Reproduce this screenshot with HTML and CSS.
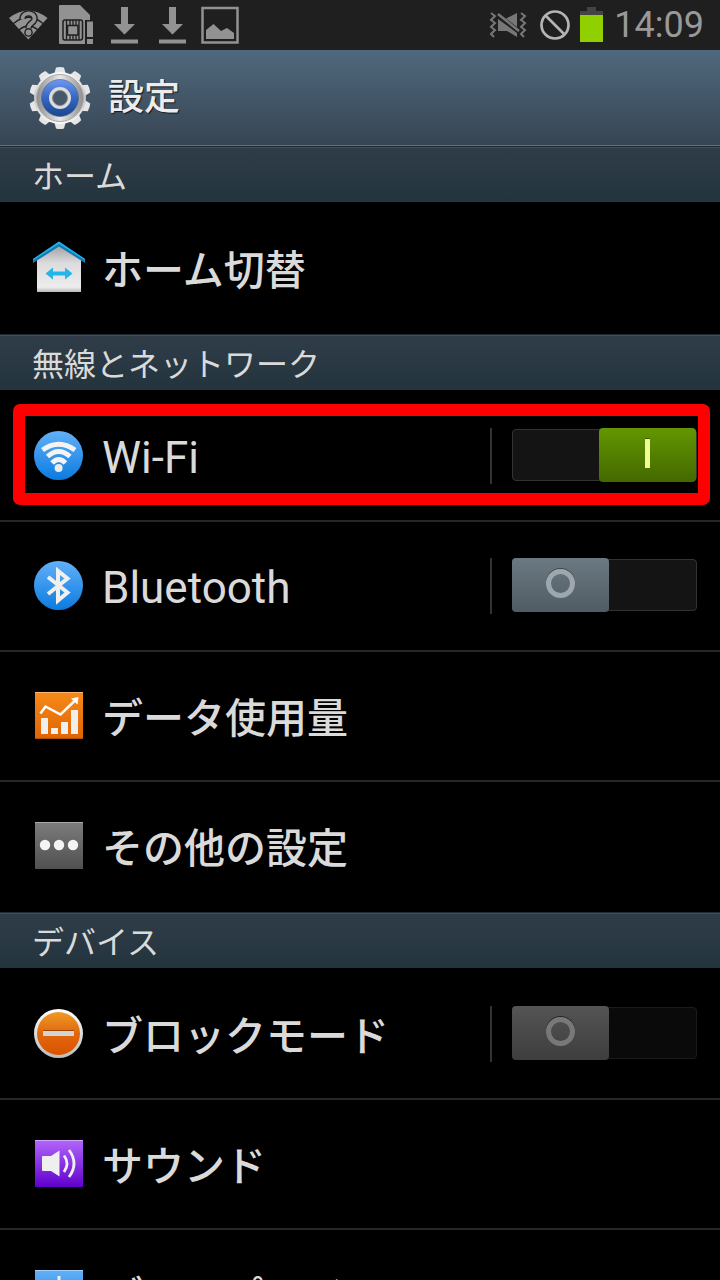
FILE: index.html
```html
<!DOCTYPE html>
<html lang="ja">
<head>
    <meta charset="UTF-8">
    <meta name="viewport" content="width=device-width, initial-scale=1.0">
    <title>設定</title>
    <link rel="stylesheet" href="styles.css">
</head>
<body>

    <div class="status-bar">
        <div class="status-left">
            <svg width="48" height="50" viewBox="0 0 48 50">
                <path d="M5 18Q24.3 3 43.5 18L24.3 39.5z" fill="#929292"/>
                <path d="M9.500 23.500Q24.300 11 39 23.500M15 30Q24.300 22 34 30" fill="none" stroke="#1f1f1f" stroke-width="1.400"/>
                <path d="M18.500 19C18.500 11.500 31 11.500 30.500 19C30.500 23 24.500 23 24.500 28.500" fill="none" stroke="#1f1f1f" stroke-width="6.500"/>
                <circle cx="24.500" cy="32.500" r="4.300" fill="#1f1f1f"/>
                <path d="M18.500 19C18.500 11.500 31 11.500 30.500 19C30.500 23 24.500 23 24.500 28" fill="none" stroke="#929292" stroke-width="3.800"/>
                <circle cx="24.500" cy="32.500" r="2.900" fill="#929292"/>
            </svg>
            <svg width="48" height="50" viewBox="0 0 48 50">
                <path d="M8 5H28L38 15V20H33V44H8Q7 44 7 43V6Q7 5 8 5z" fill="#929292"/>
                <rect x="11" y="20" width="19.500" height="20" rx="2" fill="none" stroke="#1f1f1f" stroke-width="1.500"/>
                <path d="M14.500 20v20M27 20v20M18 20v5M21 20v5M24 20v5M18 35v5M21 35v5M24 35v5" stroke="#1f1f1f" stroke-width="1.300"/>
                <rect x="15.500" y="25.500" width="10.500" height="9.500" fill="#929292" stroke="#1f1f1f" stroke-width="1.500"/>
                <path d="M35 21.500h6v15.500h-6zM35 39h6v5h-6z" fill="#929292"/>
            </svg>
            <svg width="48" height="50" viewBox="0 0 48 50">
                <path d="M21 7H28V24H35L24.500 34.500L14 24H21zM11 39.500H38V43.500H11z" fill="#929292"/>
            </svg>
            <svg width="48" height="50" viewBox="0 0 48 50">
                <path d="M21 7H28V24H35L24.500 34.500L14 24H21zM11 39.500H38V43.500H11z" fill="#929292"/>
            </svg>
            <svg width="48" height="50" viewBox="0 0 48 50">
                <rect x="6.500" y="8" width="35" height="34.500" fill="none" stroke="#929292" stroke-width="2.500"/>
                <path d="M10 39V30L17.500 24L25 31L31 28L38 33V39z" fill="#929292"/>
            </svg>
        </div>
        <div class="status-right">
            <svg width="40" height="50" viewBox="0 0 40 50">
                <path d="M3 13l4 3l-4 4l4 3l-4 4l4 3l-4 4l3 3M33 13l4 3l-4 4l4 3l-4 4l4 3l-4 4l3 3" fill="none" stroke="#777" stroke-width="2"/>
                <path d="M10 19L29 33V37L19 31H10zM18 18.500L29 13V27z" fill="#777"/>
                <path d="M10 14L31 31" stroke="#777" stroke-width="2.500"/>
            </svg>
            <svg width="32" height="50" viewBox="0 0 32 50">
                <circle cx="17" cy="25" r="13.500" fill="none" stroke="#b4b4b4" stroke-width="2.700"/>
                <path d="M7.500 15.500L26.500 34.500" stroke="#b4b4b4" stroke-width="2.700"/>
            </svg>
            <svg width="24" height="50" viewBox="0 0 24 50">
                <path d="M7 7H16V11H23V15H0V11H7z" fill="#444"/>
                <path d="M0 15H23V42H0z" fill="#92cf00"/>
            </svg>
            <time class="clock">14:09</time>
        </div>
    </div>

    <header class="title-bar">
        <svg width="64" height="64" viewBox="0 0 64 64">
            <defs>
                <linearGradient id="gearMetal" x2="0" y2="1">
                    <stop offset="0" stop-color="#f8f8f8"/>
                    <stop offset=".5" stop-color="#c4c4c4"/>
                    <stop offset="1" stop-color="#fafafa"/>
                </linearGradient>
                <linearGradient id="gearBand">
                    <stop offset="0" stop-color="#8e8e8e"/>
                    <stop offset=".5" stop-color="#e8e8e8"/>
                    <stop offset="1" stop-color="#8e8e8e"/>
                </linearGradient>
                <linearGradient id="gearBlue" x2="0" y2="1">
                    <stop offset="0" stop-color="#6e98f2"/>
                    <stop offset=".5" stop-color="#3566c2"/>
                    <stop offset="1" stop-color="#18468f"/>
                </linearGradient>
                <path id="tooth" d="M26 9L28 1.500Q32 .5 36 1.500L38 9z"/>
            </defs>
            <g fill="#e6e6e6">
                <use href="#tooth"/>
                <use href="#tooth" transform="rotate(36 32 32)"/>
                <use href="#tooth" transform="rotate(72 32 32)"/>
                <use href="#tooth" transform="rotate(108 32 32)"/>
                <use href="#tooth" transform="rotate(144 32 32)"/>
                <use href="#tooth" transform="rotate(180 32 32)"/>
                <use href="#tooth" transform="rotate(216 32 32)"/>
                <use href="#tooth" transform="rotate(252 32 32)"/>
                <use href="#tooth" transform="rotate(288 32 32)"/>
                <use href="#tooth" transform="rotate(324 32 32)"/>
            </g>
            <circle cx="32" cy="32" r="26" fill="url(#gearMetal)"/>
            <circle cx="32" cy="32" r="23.500" fill="url(#gearBand)" stroke="#aaa"/>
            <circle cx="32" cy="32" r="18.500" fill="url(#gearBlue)" stroke="#4a5f86" stroke-width=".6"/>
            <circle cx="32" cy="32" r="9.200" fill="#45596b" stroke="#dcdcdc" stroke-width="3.600"/>
            <circle cx="32" cy="32" r="7.500" fill="none" stroke="#858585"/>
        </svg>
        <h1>設定</h1>
    </header>

    <main class="settings">
        <h2>ホーム</h2>
        <ul>
            <li>
                <svg width="54" height="54" viewBox="0 0 54 54">
                    <defs>
                        <linearGradient id="wall" x2="0" y2="1">
                            <stop offset="0" stop-color="#9c9ca0"/>
                            <stop offset=".4" stop-color="#dcdcde"/>
                            <stop offset=".9" stop-color="#ececec"/>
                            <stop offset="1" stop-color="#b8b8b8"/>
                        </linearGradient>
                    </defs>
                    <path d="M5 17L27 3L49 17V51H5z" fill="url(#wall)"/>
                    <path d="M1 18L27 .500L53 18V22L27 5.500L1 22z" fill="#1279b2"/>
                    <path d="M1 18L27 .500L53 18V19.500L27 3L1 19.500z" fill="#1fb0e8"/>
                    <path d="M13.500 32.500L21 26.500V30.500H33V26.500L40.500 32.500L33 38.500V34.500H21V38.500z" fill="#25b5e8"/>
                </svg>
                <a href="#home">ホーム切替</a>
            </li>
        </ul>

        <h2>無線とネットワーク</h2>
        <ul>
            <li class="highlight">
                <svg width="54" height="54" viewBox="0 0 54 54">
                    <defs>
                        <linearGradient id="blue" x2="0" y2="1">
                            <stop offset="0" stop-color="#62b0f8"/>
                            <stop offset="1" stop-color="#0b7be0"/>
                        </linearGradient>
                    </defs>
                    <circle cx="26.500" cy="26.500" r="24.500" fill="url(#blue)"/>
                    <g fill="none" stroke="#f4f4f4" stroke-width="5">
                        <path d="M10.500 21Q26.700 9.500 43 21"/>
                        <path d="M15.500 27.500Q26.700 17.500 38 27.500"/>
                        <path d="M20 34Q26.700 27 33.500 34"/>
                    </g>
                    <circle cx="26.600" cy="39" r="4" fill="#ececec"/>
                </svg>
                <label class="latin" for="wifi">Wi-Fi</label>
                <span class="switch-cell"><input type="checkbox" role="switch" id="wifi" checked></span>
            </li>
            <li>
                <svg width="54" height="54" viewBox="0 0 54 54">
                    <circle cx="26.500" cy="26.500" r="24.500" fill="url(#blue)"/>
                    <path d="M16 18L35.500 33.500L26 41.500V12L35.500 19.500L16 35" fill="none" stroke="#f0f0f0" stroke-width="4"/>
                </svg>
                <label class="latin" for="bluetooth">Bluetooth</label>
                <span class="switch-cell"><input type="checkbox" role="switch" id="bluetooth"></span>
            </li>
            <li>
                <svg width="54" height="54" viewBox="0 0 54 54">
                    <defs>
                        <linearGradient id="orange" x2="0" y2="1">
                            <stop offset="0" stop-color="#f58a1c"/>
                            <stop offset="1" stop-color="#e06400"/>
                        </linearGradient>
                    </defs>
                    <rect x="3" y="3" width="48" height="47" fill="url(#orange)"/>
                    <path d="M3 3.500H51" stroke="#fbb56c"/>
                    <path d="M3 49.500H51" stroke="#b24e00"/>
                    <path d="M9 29h7v16H9zM19 39h7v6h-7zM29 33h7v12h-7zM39 21h7v24h-7z" fill="#efefef"/>
                    <path d="M8.500 24.500L13.500 17.500L28.500 25.500L43 11.500" fill="none" stroke="#fff" stroke-width="2.500"/>
                    <path d="M39 9.500L46.500 8L45.500 15.500z" fill="#fff"/>
                </svg>
                <a href="#data">データ使用量</a>
            </li>
            <li>
                <svg width="54" height="54" viewBox="0 0 54 54">
                    <defs>
                        <linearGradient id="gray" x2="0" y2="1">
                            <stop offset="0" stop-color="#7c7c7c"/>
                            <stop offset="1" stop-color="#505050"/>
                        </linearGradient>
                    </defs>
                    <rect x="3" y="3" width="48" height="47" fill="url(#gray)"/>
                    <path d="M3 3.500H51" stroke="#a8a8a8"/>
                    <g fill="#f4f4f4">
                        <circle cx="13" cy="26" r="5.200"/>
                        <circle cx="27" cy="26" r="5.200"/>
                        <circle cx="41" cy="26" r="5.200"/>
                    </g>
                </svg>
                <a href="#more">その他の設定</a>
            </li>
        </ul>

        <h2>デバイス</h2>
        <ul>
            <li>
                <svg width="54" height="54" viewBox="0 0 54 54">
                    <defs>
                        <linearGradient id="block" x2="0" y2="1">
                            <stop offset="0" stop-color="#f09a26"/>
                            <stop offset=".5" stop-color="#e0680c"/>
                            <stop offset="1" stop-color="#da5200"/>
                        </linearGradient>
                        <linearGradient id="rim" x2="0" y2="1">
                            <stop offset="0" stop-color="#fff"/>
                            <stop offset="1" stop-color="#bcbcbc"/>
                        </linearGradient>
                    </defs>
                    <circle cx="26.500" cy="26.500" r="24.500" fill="url(#rim)"/>
                    <circle cx="26.500" cy="26.500" r="21.500" fill="url(#block)"/>
                    <path d="M11 23.500H42" stroke="#9c4600"/>
                    <rect x="11" y="24" width="31" height="5" fill="#d4d4d4"/>
                </svg>
                <label for="block-mode">ブロックモード</label>
                <span class="switch-cell"><input type="checkbox" role="switch" id="block-mode" disabled></span>
            </li>
            <li>
                <svg width="54" height="54" viewBox="0 0 54 54">
                    <defs>
                        <linearGradient id="purple" x2="0" y2="1">
                            <stop offset="0" stop-color="#b266fa"/>
                            <stop offset="1" stop-color="#6000cc"/>
                        </linearGradient>
                    </defs>
                    <rect x="3" y="3" width="48" height="47" fill="url(#purple)"/>
                    <path d="M3 3.500H51" stroke="#d2a4fb"/>
                    <path d="M11 19H19L27.500 13.500V39.500L19 34H11Q10 34 10 33V20Q10 19 11 19z" fill="#efefef"/>
                    <path d="M32 18.500Q38 26.500 32 35M37 13Q47 26.500 37 40" fill="none" stroke="#efefef" stroke-width="2.800"/>
                </svg>
                <a href="#sound">サウンド</a>
            </li>
            <li>
                <svg width="54" height="54" viewBox="0 0 54 54">
                    <rect x="3" y="3" width="48" height="47" fill="url(#blue)"/>
                    <path d="M3 3.500H51" stroke="#a4d2fb"/>
                    <circle cx="27" cy="26.500" r="7.500" fill="#efefef"/>
                    <path d="M27 9v7M27 37v7M9.500 26.500h7M37.500 26.500h7M14.500 14l5 5M34.500 34l5 5M39.500 14l-5 5M19.500 34l-5 5" stroke="#efefef" stroke-width="3"/>
                </svg>
                <a href="#display">ディスプレイ</a>
            </li>
        </ul>
    </main>

</body>
</html>
```
FILE: styles.css
```css
*, *::before, *::after {
    box-sizing: border-box;
}
body {
    margin: 0;
    height: 100vh;
    display: flex;
    flex-direction: column;
    background: #000;
    color: #dadada;
    font-family: Roboto, "Noto Sans CJK JP", sans-serif;
}
svg {
    display: block;
    flex: none;
}
.status-bar {
    display: flex;
    flex: none;
    justify-content: space-between;
    height: 50px;
    padding: 0 16px 0 4px;
    background: #1f1f1f;
}
.status-left, .status-right {
    display: flex;
    align-items: center;
}
.status-right {
    gap: 10px;
}
.clock {
    color: #999;
    font-size: 36px;
    line-height: 50px;
}
.title-bar {
    display: flex;
    flex: none;
    align-items: center;
    gap: 16px;
    height: 96px;
    padding: 0 28px;
    background: linear-gradient(#50687d, #364553);
    border-bottom: 1px solid #5d7488;
}
h1 {
    margin: 0;
    color: #ececec;
    font-size: 36px;
    font-weight: 500;
    line-height: 48px;
    text-shadow: 1px 1px 1px #10181f;
}
.settings {
    flex: 1;
    overflow-y: auto;
    scrollbar-width: none;
}
h2 {
    height: 56px;
    margin: 0;
    padding: 2px 32px 0;
    background: linear-gradient(#303d49, #23343d);
    border-top: 1px solid #1f2b34;
    box-shadow: inset 0 1px #3f4f5c;
    font-size: 32px;
    font-weight: 400;
    line-height: 56px;
}
ul {
    margin: 0;
    padding: 2px 0 0;
    list-style: none;
}
li {
    position: relative;
    display: flex;
    align-items: center;
    gap: 16px;
    height: 130px;
    padding: 0 23px 0 32px;
    border-bottom: 2px solid #262626;
}
li:last-child {
    border-bottom-color: transparent;
}
li a, li label {
    flex: 1;
    padding-top: 6px;
    color: inherit;
    font-size: 41px;
    font-weight: 500;
    line-height: 60px;
    text-decoration: none;
}
li .latin {
    padding-top: 4px;
    font-size: 44px;
    font-weight: 400;
}
.switch-cell {
    padding: 1px 0 3px 20px;
    border-left: 2px solid #333;
}
input {
    position: relative;
    display: block;
    width: 185px;
    height: 52px;
    margin: 0;
    appearance: none;
    background: #141414;
    border: 1px solid #333;
    border-radius: 4px;
}
/* sliding thumb */
input::before {
    content: "";
    position: absolute;
    top: -2px;
    left: -1px;
    width: 97px;
    height: 54px;
    border-radius: 4px;
    background: linear-gradient(#6b7982, #505c63);
}
/* off ring */
input::after {
    content: "";
    position: absolute;
    top: 9px;
    left: 33px;
    width: 29px;
    height: 29px;
    border: 5px solid #9ea7ad;
    border-radius: 50%;
    box-shadow: 0 -1px #3c464c;
}
input:checked::before {
    right: 0;
    left: auto;
    background: linear-gradient(#639700, #446800);
}
/* on bar */
input:checked::after {
    right: 46px;
    left: auto;
    width: 5px;
    border: 0;
    border-radius: 0;
    background: #efff91;
    box-shadow: 0 -1px #3d5c00;
}
input:disabled {
    background: #0a0a0a;
    border-color: #1a1a1a;
}
input:disabled::before {
    background: linear-gradient(#545454, #3e3e3e);
}
input:disabled::after {
    border-color: #787878;
    box-shadow: 0 -1px #222;
}
.highlight::after {
    content: "";
    position: absolute;
    inset: 12px 10px 15px 13px;
    border: 12px solid #f00;
    border-radius: 7px;
    pointer-events: none;
}
```
